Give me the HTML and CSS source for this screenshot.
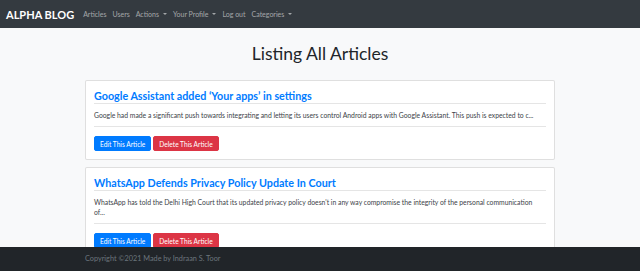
FILE: index.html
```html
<!DOCTYPE html>
<html lang="en">
<head>
<meta charset="utf-8">
<title>Alpha Blog</title>
<link rel="stylesheet" href="styles.css">
</head>
<body>
<nav class="navbar">
  <a class="brand" href="#">ALPHA BLOG</a>
  <ul class="nav">
    <li><a class="nav-link" href="#">Articles</a></li>
    <li><a class="nav-link" href="#">Users</a></li>
    <li><a class="nav-link dropdown" href="#">Actions<span class="caret"></span></a></li>
    <li><a class="nav-link dropdown" href="#">Your Profile<span class="caret"></span></a></li>
    <li><a class="nav-link" href="#">Log out</a></li>
    <li><a class="nav-link dropdown" href="#">Categories<span class="caret"></span></a></li>
  </ul>
</nav>

<main class="container">
  <h1 class="page-title">Listing All Articles</h1>

  <article class="card">
    <h4 class="card-title"><a href="#">Google Assistant added ‘Your apps’ in settings</a></h4>
    <div class="card-text">
      <p>Google had made a significant push towards integrating and letting its users control Android apps with Google Assistant. This push is expected to c...</p>
    </div>
    <div class="actions">
      <a class="btn btn-primary" href="#">Edit This Article</a>
      <a class="btn btn-danger" href="#">Delete This Article</a>
    </div>
  </article>

  <article class="card">
    <h4 class="card-title"><a href="#">WhatsApp Defends Privacy Policy Update In Court</a></h4>
    <div class="card-text">
      <p>WhatsApp has told the Delhi High Court that its updated privacy policy doesn't in any way compromise the integrity of the personal communication of...</p>
    </div>
    <div class="actions">
      <a class="btn btn-primary" href="#">Edit This Article</a>
      <a class="btn btn-danger" href="#">Delete This Article</a>
    </div>
  </article>
</main>

<footer class="footer">
  <div class="container footer-inner">Copyright ©2021 Made by Indraan S. Toor</div>
</footer>
</body>
</html>
```

FILE: styles.css
```css
* { box-sizing: border-box; }

body {
  margin: 0;
  background: #f8f9fa;
  font-family: Lato, "Open Sans", sans-serif;
  color: #212529;
}

a { text-decoration: none; }

.navbar {
  height: 28px;
  background: #343a40;
  display: flex;
  align-items: center;
  padding: 0 8px 0 6px;
}

.brand {
  color: #fff;
  font-size: 11px;
  font-weight: 700;
  margin-right: 6px;
  white-space: nowrap;
}

.nav {
  list-style: none;
  margin: 0;
  padding: 0;
  display: flex;
  align-items: center;
}

.nav-link {
  display: flex;
  align-items: center;
  padding: 0 3px;
  font-size: 7px;
  color: rgba(255, 255, 255, 0.55);
  white-space: nowrap;
}

.caret {
  display: inline-block;
  margin-left: 4px;
  border-top: 2.5px solid rgba(255, 255, 255, 0.55);
  border-left: 2.5px solid transparent;
  border-right: 2.5px solid transparent;
}

.container {
  width: 470px;
  margin: 0 auto;
}

.page-title {
  margin: 14px 0 14px;
  font-size: 17.5px;
  font-weight: 400;
  line-height: 24px;
  text-align: center;
  color: #212529;
}

.card {
  background: #fff;
  border: 1px solid rgba(0, 0, 0, 0.125);
  border-radius: 2px;
  padding: 8px 8px 8px;
  margin-bottom: 7px;
}

.card-title {
  margin: 0;
  font-size: 10.75px;
  line-height: 14px;
  font-weight: 700;
  border-bottom: 1px solid rgba(0, 0, 0, 0.1);
}

.card-title a { color: #007bff; }

.card-text {
  padding: 6px 0 6px;
  border-bottom: 1px solid rgba(0, 0, 0, 0.1);
}

.card-text p {
  margin: 0;
  padding-right: 4px;
  font-size: 6.8px;
  line-height: 10px;
  color: #3d4349;
}

.actions {
  display: flex;
  gap: 2px;
  margin-top: 9px;
}

.btn {
  display: inline-flex;
  align-items: center;
  height: 15px;
  padding: 0 5px;
  font-size: 6.6px;
  color: #fff;
  border-radius: 2px;
  white-space: nowrap;
}

.btn-primary { background: #007bff; border: 1px solid #007bff; }
.btn-danger { background: #dc3545; border: 1px solid #dc3545; }

.footer {
  position: fixed;
  left: 0;
  right: 0;
  bottom: 0;
  height: 24px;
  background: #212529;
}

.footer-inner {
  line-height: 24px;
  font-size: 7.3px;
  color: #6c757d;
}
```
